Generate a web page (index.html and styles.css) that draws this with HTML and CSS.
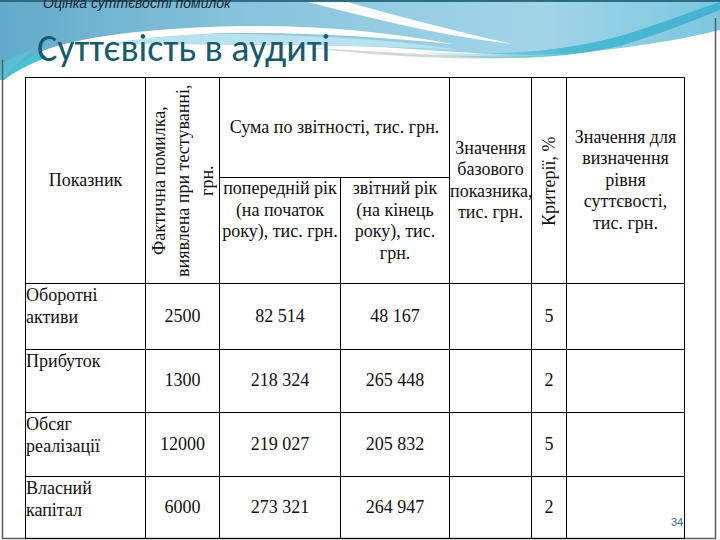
FILE: index.html
```html
<!DOCTYPE html>
<html>
<head>
<meta charset="utf-8">
<title>Slide 34</title>
<link rel="stylesheet" href="styles.css">
</head>
<body>
<div class="slide">
  <svg class="bg" width="720" height="540" viewBox="0 0 720 540" aria-hidden="true">
    <defs>
      <linearGradient id="sky" x1="0" y1="0" x2="1" y2="0">
        <stop offset="0" stop-color="#62abca"/>
        <stop offset="0.35" stop-color="#88c4dc"/>
        <stop offset="0.75" stop-color="#a3d5e8"/>
        <stop offset="1" stop-color="#7ac7dd"/>
      </linearGradient>
      <linearGradient id="cyan" x1="0" y1="0" x2="1" y2="0">
        <stop offset="0" stop-color="#5cc8dc" stop-opacity="0.2"/>
        <stop offset="0.5" stop-color="#3fb6d0"/>
        <stop offset="1" stop-color="#3aaed0"/>
      </linearGradient>
    </defs>
    <rect width="720" height="540" fill="#ffffff"/>
    <path d="M0,0 H720 V30 C680,40 620,50 560,54 C500,57 440,50 380,47 C330,45 280,45 240,44 C190,43 150,40 120,36 C80,40 40,56 0,80 Z" fill="url(#sky)"/>
    <path d="M110,40 C160,34 220,33 280,35 C350,37 410,42 460,50 C400,47 330,45 260,45 C200,45 150,44 110,44 Z" fill="#b9e1ee"/>
    <path d="M0,80 C12,68 26,58 44,50 L50,56 C30,64 14,72 4,80 Z" fill="#43c3d6"/>
    <path d="M0,64 C10,58 22,53 34,49 L0,80 Z" fill="#52c6d8" opacity="0.7"/>
    <path d="M40,52 C80,36 150,28 240,26 C320,25 390,32 452,44 C390,38 320,33 250,33 C170,33 110,40 48,58 Z" fill="#ffffff"/>
    <path d="M300,0 H340 C390,14 450,30 512,44 C440,36 370,18 300,0 Z" fill="#ffffff" opacity="0.95"/>
    <path d="M420,52 C500,56 560,52 620,36 C660,24 690,12 720,2 V10 C690,22 660,34 620,46 C560,60 480,62 420,52 Z" fill="url(#cyan)" opacity="0.85"/>
    <path d="M300,47 C380,52 460,58 540,56 C470,62 380,56 300,47 Z" fill="#9aa9ae" opacity="0.45"/>
    <rect x="0" y="0" width="720" height="2" fill="#2c6c84"/>
    <path d="M2.5,60 V538.5 H715.5 V18" fill="none" stroke="#5b5b5b" stroke-width="1.5"/>
  </svg>

  <div class="subtitle">Оцінка суттєвості помилок</div>
  <h1 class="title">Суттєвість в аудиті</h1>

  <table class="grid">
    <colgroup>
      <col class="c1"><col class="c2"><col class="c3"><col class="c4"><col class="c5"><col class="c6"><col class="c7">
    </colgroup>
    <tr class="h1">
      <td rowspan="2" class="mid">Показник</td>
      <td rowspan="2" class="mid"><div class="vert vert-wide">Фактична помилка,<br>виявлена при тестуванні,<br>грн.</div></td>
      <td colspan="2" class="mid">Сума по звітності, тис. грн.</td>
      <td rowspan="2" class="mid">Значення<br>базового<br>показника,<br>тис. грн.</td>
      <td rowspan="2" class="mid"><div class="vert vert-narrow">Критерії, %</div></td>
      <td rowspan="2" class="mid">Значення для<br>визначення<br>рівня<br>суттєвості,<br>тис. грн.</td>
    </tr>
    <tr class="h2">
      <td class="top">попередній рік<br>(на початок<br>року), тис. грн.</td>
      <td class="top">звітний рік<br>(на кінець<br>року), тис.<br>грн.</td>
    </tr>
    <tr class="r1">
      <td class="label">Оборотні<br>активи</td>
      <td class="num">2500</td><td class="num">82 514</td><td class="num">48 167</td>
      <td></td><td class="num">5</td><td></td>
    </tr>
    <tr class="r2">
      <td class="label">Прибуток</td>
      <td class="num">1300</td><td class="num">218 324</td><td class="num">265 448</td>
      <td></td><td class="num">2</td><td></td>
    </tr>
    <tr class="r3">
      <td class="label">Обсяг<br>реалізації</td>
      <td class="num">12000</td><td class="num">219 027</td><td class="num">205 832</td>
      <td></td><td class="num">5</td><td></td>
    </tr>
    <tr class="r4">
      <td class="label">Власний<br>капітал</td>
      <td class="num">6000</td><td class="num">273 321</td><td class="num">264 947</td>
      <td></td><td class="num">2</td><td></td>
    </tr>
  </table>

  <div class="pagenum">34</div>
</div>
</body>
</html>
```

FILE: styles.css
```css
html, body {
  margin: 0;
  padding: 0;
  background: #ffffff;
}

body {
  font-family: "Liberation Serif", "Times New Roman", serif;
  font-size: 18px;
}

.slide {
  position: relative;
  z-index: 0;
  width: 720px;
  height: 540px;
  overflow: hidden;
}

.bg {
  position: absolute;
  left: 0;
  top: 0;
  z-index: -1;
}

.subtitle {
  margin: -5px 0 0 43px;
  height: 15px;
  font-family: "Liberation Sans", Arial, sans-serif;
  font-style: italic;
  font-size: 14px;
  line-height: 16px;
  color: #1c2430;
}

.title {
  margin: 0 0 6px 37px;
  padding-top: 16px;
  font-family: Carlito, Lato, sans-serif;
  font-weight: 400;
  font-size: 38px;
  line-height: 45px;
  color: #165a70;
}

.grid {
  margin-left: 25px;
  border-collapse: collapse;
  table-layout: fixed;
  width: 660px;
  font-family: "Liberation Serif", "Times New Roman", serif;
  font-size: 18px;
}

.grid td {
  border: 1px solid #000000;
  padding: 0;
  text-align: center;
  white-space: nowrap;
  font-family: "Liberation Serif", "Times New Roman", serif;
  font-size: 18px;
  line-height: 21.5px;
  color: #111111;
}

.c1 { width: 120px; }
.c2 { width: 74px; }
.c3 { width: 121px; }
.c4 { width: 109px; }
.c5 { width: 82px; }
.c6 { width: 35px; }
.c7 { width: 118px; }

.h1 { height: 100px; }
.h2 { height: 106px; }
.r1 { height: 66px; }
.r2 { height: 63px; }
.r3 { height: 64px; }
.r4 { height: 62px; }

.mid { vertical-align: middle; }
.top { vertical-align: top; }

.grid td.label {
  text-align: left;
  vertical-align: top;
  padding-top: 1px;
}

.num { vertical-align: middle; }

.vert {
  writing-mode: vertical-rl;
  transform: rotate(180deg);
  margin: 0 auto;
  text-align: center;
  white-space: nowrap;
  line-height: 24px;
}

.vert-wide {
  height: 200px;
}

.vert-narrow {
  height: 120px;
}

.pagenum {
  position: absolute;
  left: 671px;
  top: 516px;
  font-family: "Liberation Sans", Arial, sans-serif;
  font-size: 11px;
  color: #2f6f9a;
}
```
